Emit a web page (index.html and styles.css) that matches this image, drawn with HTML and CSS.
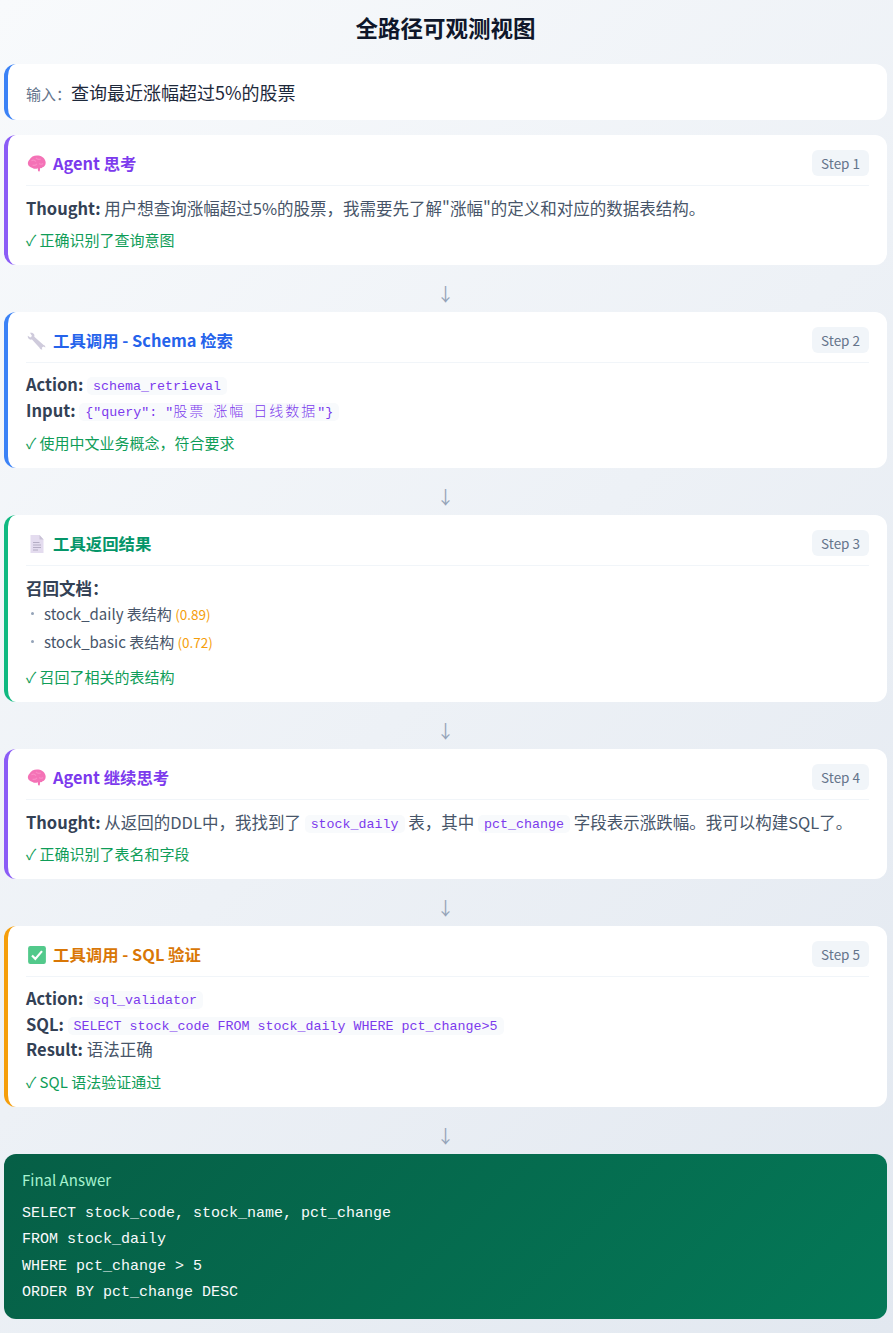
FILE: index.html
```html
<!DOCTYPE html>
<html lang="zh-CN">
<head>
<meta charset="utf-8">
<title>全路径可观测视图</title>
<link rel="stylesheet" href="styles.css">
</head>
<body>
<main class="page">
  <h1 class="page-title">全路径可观测视图</h1>

  <section class="input-card">
    <span class="input-label">输入：</span>
    <span class="input-text">查询最近涨幅超过5%的股票</span>
  </section>

  <article class="card card-purple">
    <header class="card-head">
      <div class="card-title">
        <svg class="icon" viewBox="1 1 18 18"><path fill="#f472b6" d="M3.200 6.200C4.600 3.200 8 1.900 11.200 2.400c3.600.5 6.400 3 6.600 6.200.1 2.200-1 3.800-2.800 4.300-.6.9-1.400 1-2.100.7l-.4 2.600c-.5.8-1.300.6-1.600-.2l-.2-2.200c-1.600.7-3.400.6-4.700-.3C3.500 13 2 11.600 1.800 9.800c-.1-1.500.5-2.800 1.400-3.600z"/><path fill="none" stroke="#f98bc5" stroke-width="1" d="M5 7c1.500-.8 3-.5 4 .8M9 4.500c1 1.200 3 1.500 4.500 1M6 11c1.500.5 3 0 4-1M12 9.500c1 .8 2.500.8 3.500 0"/></svg>
        <span class="title-purple">Agent 思考</span>
      </div>
      <span class="step">Step 1</span>
    </header>
    <p class="line"><strong>Thought:</strong> 用户想查询涨幅超过5%的股票，我需要先了解"涨幅"的定义和对应的数据表结构。</p>
    <p class="check">✓ 正确识别了查询意图</p>
  </article>

  <div class="arrow">↓</div>

  <article class="card card-blue">
    <header class="card-head">
      <div class="card-title">
        <svg class="icon" viewBox="0 0 20 20"><path fill="#cfcbdc" d="M3 1.800c1.700-.5 3.400.1 4.100 1.500.4.800.4 1.600.2 2.400l9.300 8.200c1.200.3 1.900 1.300 1.800 2.500l-2.100-.9-1.500 1.300.5 1.700c-1.300.2-2.400-.5-2.800-1.800L5 8.500c-1.600.4-3-.1-3.800-1.400-.4-.7-.5-1.500-.4-2.300l2.500 1.700 1.700-1.400z"/></svg>
        <span class="title-blue">工具调用 - Schema 检索</span>
      </div>
      <span class="step">Step 2</span>
    </header>
    <p class="line code-line"><strong>Action:</strong> <code>schema_retrieval</code></p>
    <p class="line code-line"><strong>Input:</strong> <code>{"query": "<span class="cjk">股票</span> <span class="cjk">涨幅</span> <span class="cjk">日线数据</span>"}</code></p>
    <p class="check">✓ 使用中文业务概念，符合要求</p>
  </article>

  <div class="arrow">↓</div>

  <article class="card card-green">
    <header class="card-head">
      <div class="card-title">
        <svg class="icon" viewBox="0 0 20 20"><path fill="#e4dcef" d="M3.500 1h9l4 4.500V19h-13z"/><path fill="#c9c2d6" d="M12.500 1l4 4.500h-4z"/><path fill="none" stroke="#b4adc4" stroke-width="1.200" d="M6 8.500h6.500M6 11h8M6 13.500h8M6 16h5"/></svg>
        <span class="title-green">工具返回结果</span>
      </div>
      <span class="step">Step 3</span>
    </header>
    <p class="line"><strong>召回文档：</strong></p>
    <ul class="docs">
      <li>stock_daily 表结构 <span class="score">(0.89)</span></li>
      <li>stock_basic 表结构 <span class="score">(0.72)</span></li>
    </ul>
    <p class="check">✓ 召回了相关的表结构</p>
  </article>

  <div class="arrow">↓</div>

  <article class="card card-purple">
    <header class="card-head">
      <div class="card-title">
        <svg class="icon" viewBox="1 1 18 18"><path fill="#f472b6" d="M3.200 6.200C4.600 3.200 8 1.900 11.200 2.400c3.600.5 6.400 3 6.600 6.200.1 2.200-1 3.800-2.800 4.300-.6.9-1.400 1-2.100.7l-.4 2.600c-.5.8-1.300.6-1.600-.2l-.2-2.200c-1.600.7-3.400.6-4.700-.3C3.500 13 2 11.600 1.800 9.800c-.1-1.500.5-2.800 1.400-3.600z"/><path fill="none" stroke="#f98bc5" stroke-width="1" d="M5 7c1.500-.8 3-.5 4 .8M9 4.500c1 1.200 3 1.500 4.500 1M6 11c1.500.5 3 0 4-1M12 9.500c1 .8 2.500.8 3.500 0"/></svg>
        <span class="title-purple">Agent 继续思考</span>
      </div>
      <span class="step">Step 4</span>
    </header>
    <p class="line"><strong>Thought:</strong> 从返回的DDL中，我找到了 <code>stock_daily</code> 表，其中 <code>pct_change</code> 字段表示涨跌幅。我可以构建SQL了。</p>
    <p class="check">✓ 正确识别了表名和字段</p>
  </article>

  <div class="arrow">↓</div>

  <article class="card card-orange">
    <header class="card-head">
      <div class="card-title">
        <svg class="icon" viewBox="1 1 18 18"><rect x="2" y="2" width="16" height="16" rx="2" fill="#52c98b"/><path fill="none" stroke="#fff" stroke-width="2" d="M5.500 10.500l3 3 6-7"/></svg>
        <span class="title-orange">工具调用 - SQL 验证</span>
      </div>
      <span class="step">Step 5</span>
    </header>
    <p class="line code-line"><strong>Action:</strong> <code>sql_validator</code></p>
    <p class="line code-line"><strong>SQL:</strong> <code>SELECT stock_code FROM stock_daily WHERE pct_change&gt;5</code></p>
    <p class="line"><strong>Result:</strong> 语法正确</p>
    <p class="check check-after-result">✓ SQL 语法验证通过</p>
  </article>

  <div class="arrow">↓</div>

  <section class="final">
    <h2 class="final-title">Final Answer</h2>
    <pre class="final-code">SELECT stock_code, stock_name, pct_change
FROM stock_daily
WHERE pct_change &gt; 5
ORDER BY pct_change DESC</pre>
  </section>
</main>
</body>
</html>
```
FILE: styles.css
```css
* { box-sizing: border-box; }
html, body { margin: 0; padding: 0; }
body {
  font-family: "Noto Sans CJK SC", "Noto Sans", sans-serif;
  background: linear-gradient(135deg, #f8fafc 0%, #e2e8f0 100%);
  color: #475569;
  min-height: 1333px;
}
.page { padding: 0 6px 14px 4px; }
.page-title {
  margin: 0 0 20px;
  height: 44px;
  padding-top: 10px;
  font-size: 22.500px;
  line-height: 34px;
  font-weight: 700;
  color: #0f172a;
  text-align: center;
}
.input-card {
  display: flex;
  align-items: center;
  height: 56px;
  margin-bottom: 15px;
  padding: 0 18px;
  background: #fff;
  border-left: 4px solid #3b82f6;
  border-radius: 12px;
}
.input-label { width: 45px; padding-top: 2px; font-size: 15px; color: #64748b; }
.input-text { font-size: 18px; color: #1e293b; }
.card {
  padding: 15px 18px 13px;
  background: #fff;
  border-left: 4px solid #8b5cf6;
  border-radius: 12px;
}
.card-purple { border-left-color: #8b5cf6; }
.card-blue { border-left-color: #3b82f6; }
.card-green { border-left-color: #10b981; }
.card-orange { border-left-color: #f59e0b; }
.card-head {
  display: flex;
  align-items: flex-start;
  justify-content: space-between;
  height: 36px;
  margin-bottom: 10px;
  border-bottom: 1px solid #f1f5f9;
}
.card-title { display: flex; align-items: center; gap: 6px; height: 26px; font-size: 16.400px; font-weight: 700; }
.icon { display: block; width: 20px; height: 20px; margin: 2px 0 0 1px; }
.title-purple { color: #7c3aed; }
.title-blue { color: #2563eb; }
.title-green { color: #059669; }
.title-orange { color: #d97706; }
.step {
  padding: 0 9px;
  height: 26px;
  line-height: 26px;
  font-size: 13.500px;
  color: #64748b;
  background: #f1f5f9;
  border-radius: 6px;
}
.line { margin: 0; font-size: 16.500px; line-height: 24px; }
.line.code-line { line-height: 26px; }
.code-line:first-of-type { margin-top: -2px; }
.line strong { color: #334155; font-weight: 700; }
code {
  padding: 1.500px 6px;
  font-family: "Liberation Mono", "Noto Sans CJK SC", monospace;
  font-size: 13.330px;
  line-height: 1;
  vertical-align: 2px;
  color: #7c3aed;
  background: #f8fafc;
  border-radius: 5px;
}
.cjk { font-size: 14px; line-height: 1; letter-spacing: 2px; font-weight: 300; }
.check { margin: 8px 0 0; font-size: 15px; line-height: 24px; color: #0f9d58; }
.check-after-result { margin-top: 9px; }
.docs { margin: 0; padding: 0; list-style: none; font-size: 15px; }
.docs + .check { margin-top: 9px; }
.docs li { position: relative; padding-left: 18px; line-height: 28px; }
.docs li::before {
  content: "";
  position: absolute;
  left: 5px;
  top: 12px;
  width: 3px;
  height: 3px;
  border-radius: 50%;
  background: #94a3b8;
}
.score { font-size: 13.500px; line-height: 1; color: #f59e0b; }
.arrow {
  height: 47px;
  font-size: 18px;
  line-height: 56px;
  color: #94a3b8;
  text-align: center;
}
.final {
  padding: 14px 18px 12px;
  color: #fff;
  background: linear-gradient(135deg, #065f46, #047857);
  border-radius: 12px;
}
.final-title { margin: 0 0 9px; font-size: 15px; line-height: 24px; font-weight: 400; color: #a7f3d0; }
.final-code { margin: 0; font-family: "Liberation Mono", monospace; font-size: 15px; line-height: 26.400px; color: #f8fafc; }
```
